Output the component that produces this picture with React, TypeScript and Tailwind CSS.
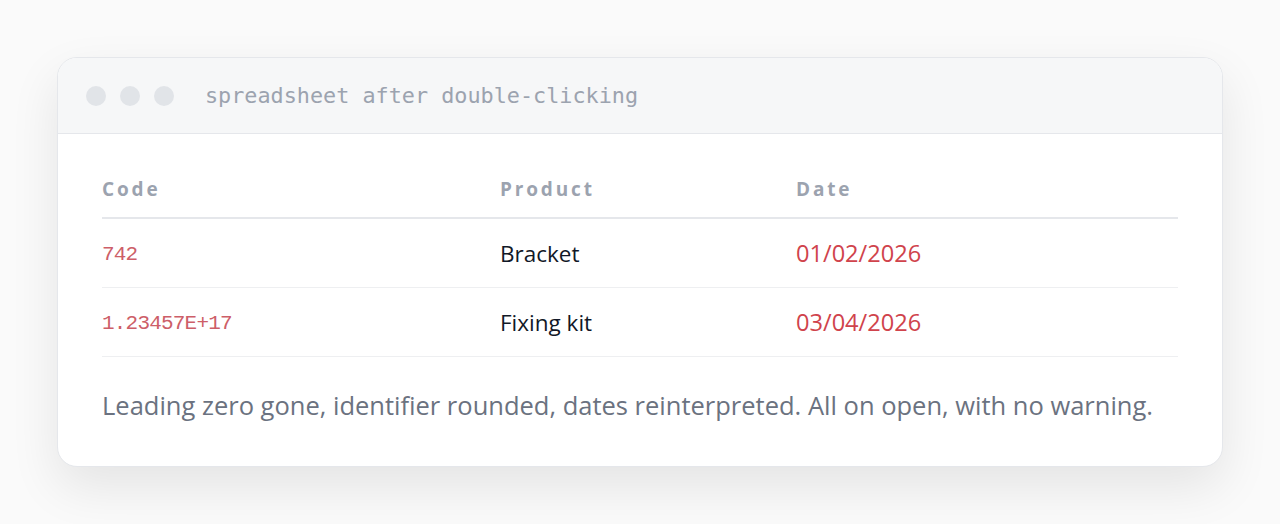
const rows = [
  { code: "742", product: "Bracket", date: "01/02/2026" },
  { code: "1.23457E+17", product: "Fixing kit", date: "03/04/2026" },
]

export default function App() {
  return (
    <div className="min-h-[524px] bg-[#fafafa] px-[57px] py-[57px] font-['Open_Sans',sans-serif]">
      <div className="overflow-hidden rounded-[20px] border border-[#e5e7eb] bg-white shadow-[0_20px_50px_rgba(0,0,0,0.09)]">
        {/* window bar */}
        <div className="flex h-[76px] items-center gap-[31px] border-b border-[#e5e7eb] bg-[#f6f7f8] pl-[28px]">
          <div className="flex gap-[14px]">
            <span className="h-[20px] w-[20px] rounded-full bg-[#e1e4e8]" />
            <span className="h-[20px] w-[20px] rounded-full bg-[#e1e4e8]" />
            <span className="h-[20px] w-[20px] rounded-full bg-[#e1e4e8]" />
          </div>
          <span className="pt-[2px] font-['DejaVu_Sans_Mono',monospace] text-[21.8px] text-[#9ca3af]">
            spreadsheet after double-clicking
          </span>
        </div>

        <div className="px-[44px] pt-[43px] pb-[45px]">
          <table className="w-full border-collapse text-left">
            <thead>
              <tr className="border-b-2 border-[#e5e7eb]">
                <th className="w-[398px] pb-[16px] text-[19px] leading-[24px] font-bold tracking-[0.15em] text-[#9ca3af]">
                  Code
                </th>
                <th className="w-[296px] pb-[16px] text-[19px] leading-[24px] font-bold tracking-[0.15em] text-[#9ca3af]">
                  Product
                </th>
                <th className="pb-[16px] text-[19px] leading-[24px] font-bold tracking-[0.15em] text-[#9ca3af]">
                  Date
                </th>
              </tr>
            </thead>
            <tbody>
              {rows.map((r) => (
                <tr key={r.code} className="border-b border-[#eeeff1]">
                  <td className="h-[69px] pt-[4px] align-middle font-['Liberation_Mono',monospace] text-[21px] tracking-[-0.8px] text-[#cd5e68]">
                    {r.code}
                  </td>
                  <td className="pt-[2px] align-middle text-[22.5px] text-[#111827]">{r.product}</td>
                  <td className="pt-[2px] align-middle text-[23.6px] text-[#d0434c]">{r.date}</td>
                </tr>
              ))}
            </tbody>
          </table>
          <p className="mt-[32px] text-[25.5px] leading-[32px] text-[#6b7280]">
            Leading zero gone, identifier rounded, dates reinterpreted. All on open, with no warning.
          </p>
        </div>
      </div>
    </div>
  )
}
